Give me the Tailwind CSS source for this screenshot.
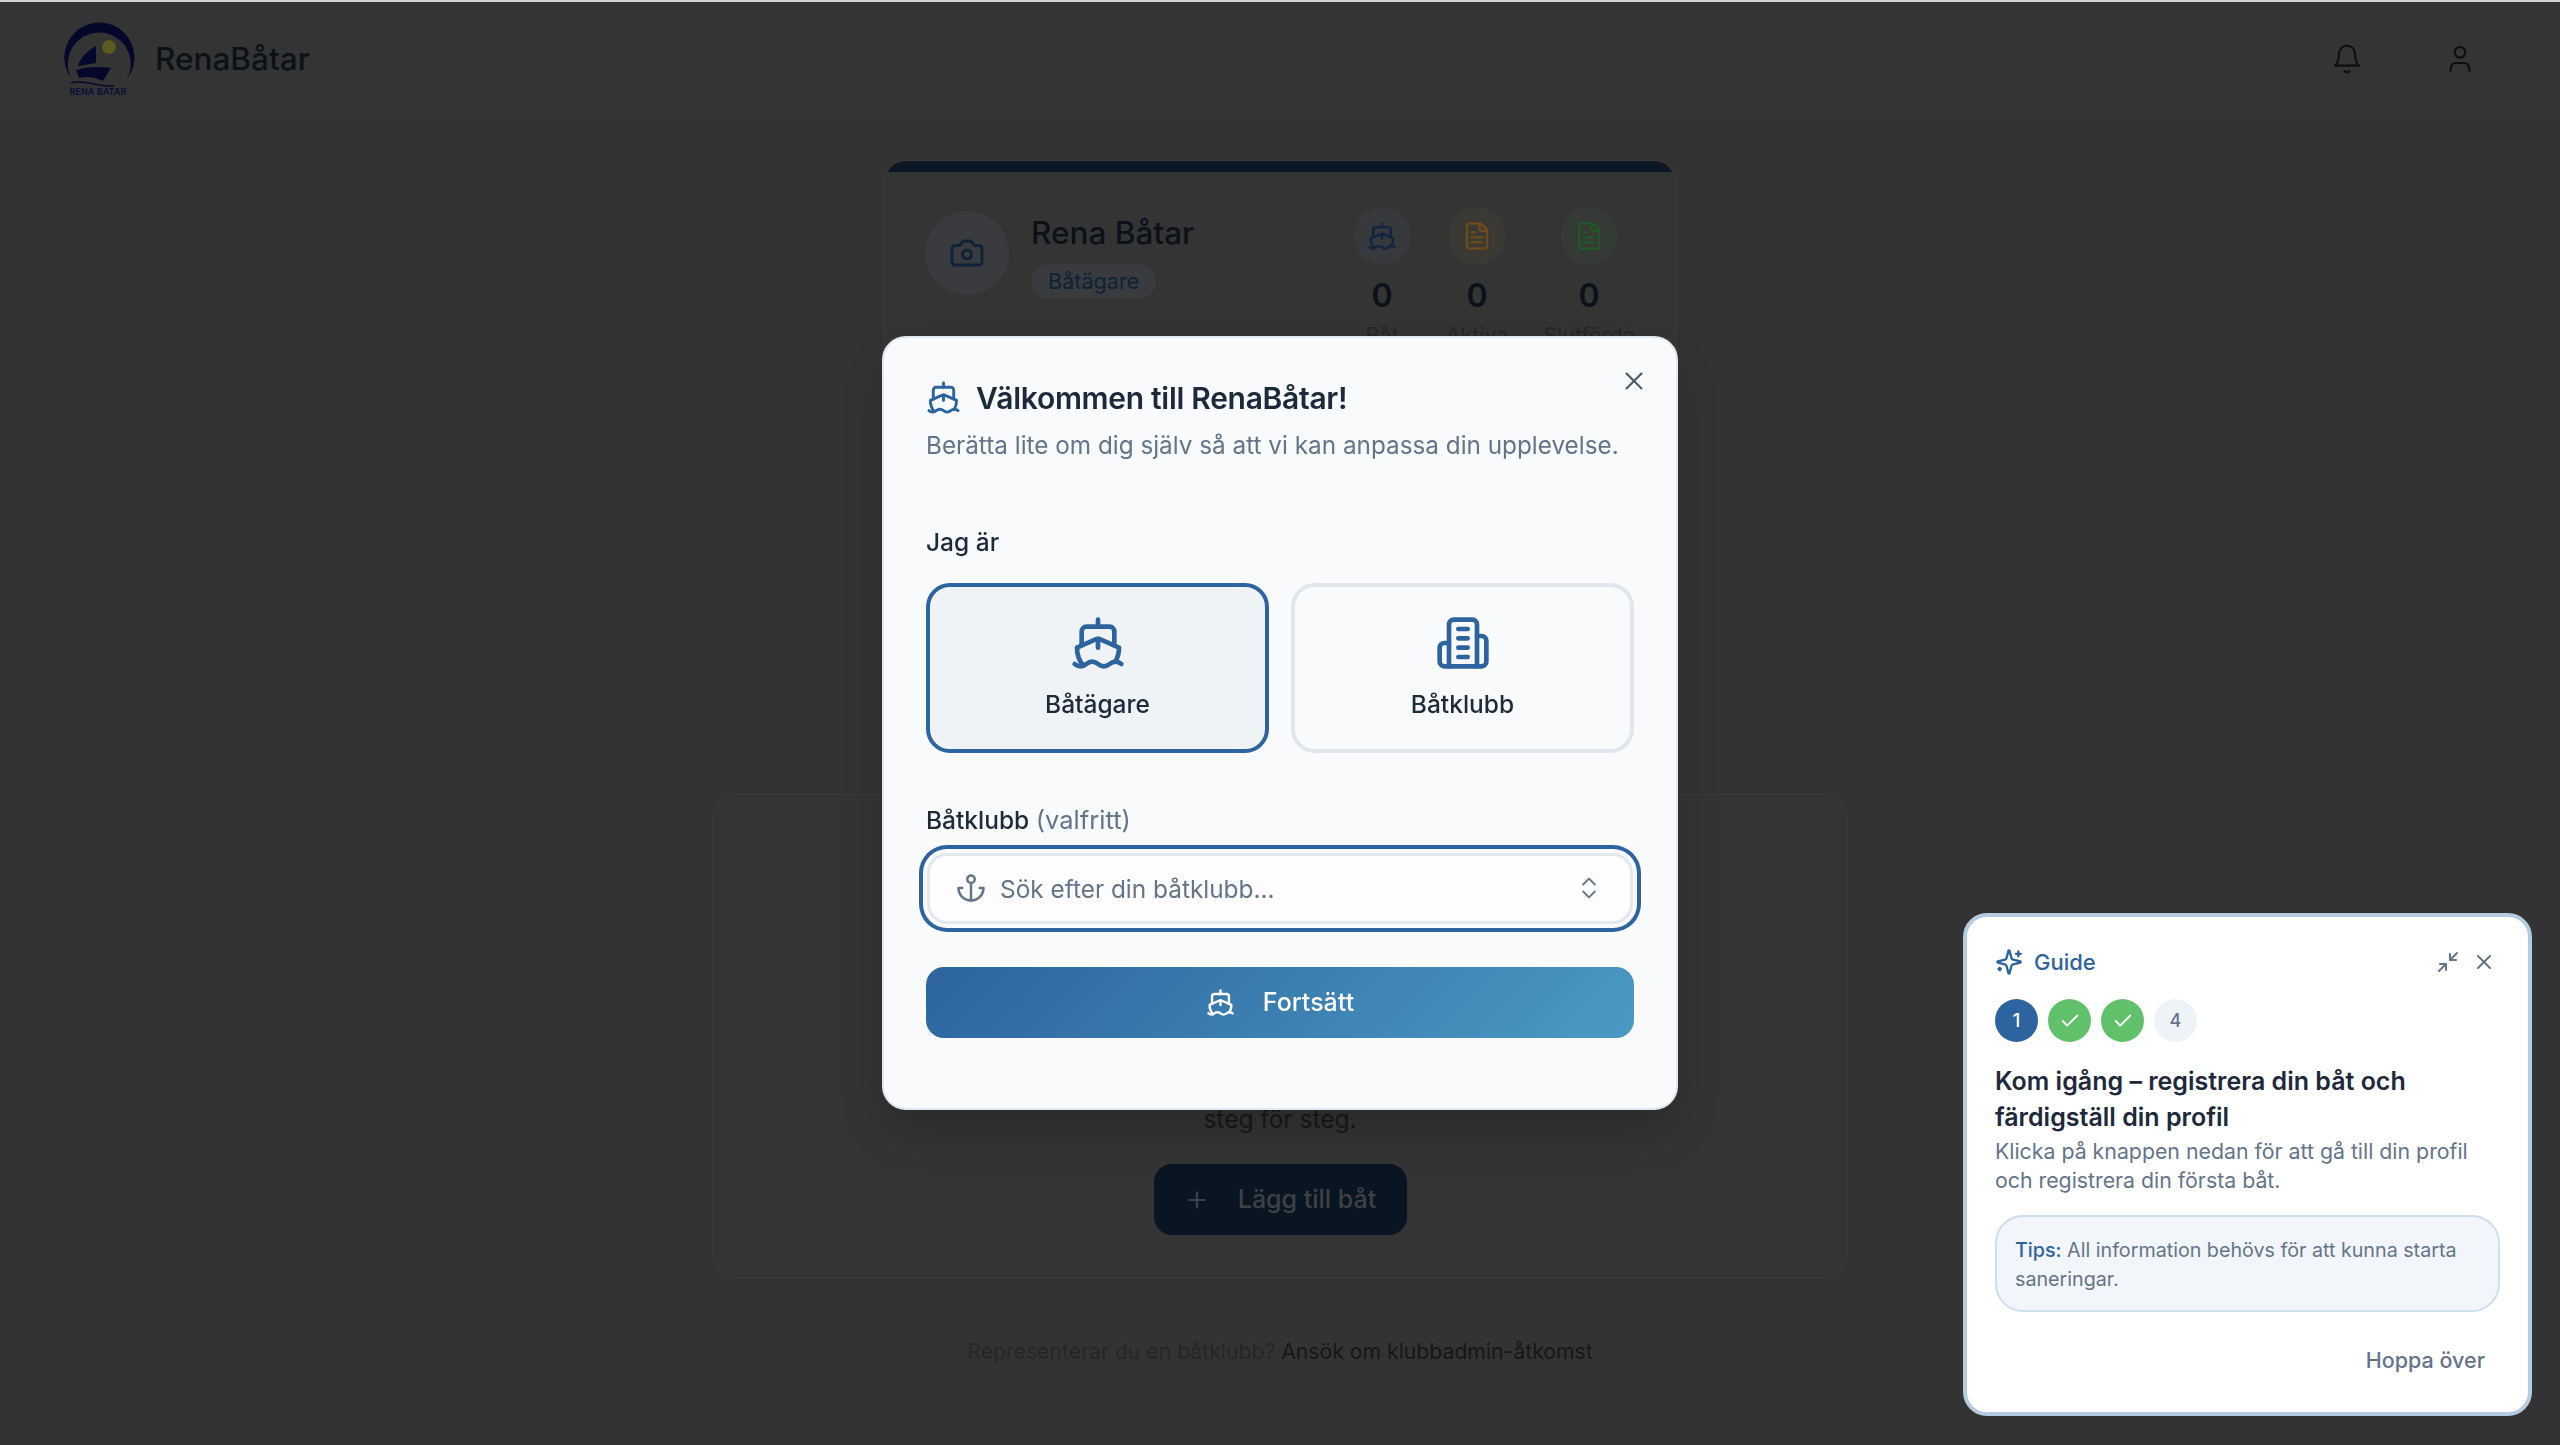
<!doctype html>
<html>
<head>
  <meta charset="UTF-8">
  <meta name="viewport" content="width=device-width, initial-scale=1.0">
  <script src="https://cdn.jsdelivr.net/npm/@tailwindcss/browser@4"></script>
</head>
<body class="bg-[#333333] font-['Inter',sans-serif] overflow-hidden">
  <!-- shared icons -->
  <svg class="hidden">
    <symbol id="i-ship" viewBox="0 0 24 24"><path d="M12 10.189V14"/><path d="M12 2v3"/><path d="M19 13V7a2 2 0 0 0-2-2H7a2 2 0 0 0-2 2v6"/><path d="M19.38 20A11.6 11.6 0 0 0 21 14l-8.188-3.639a2 2 0 0 0-1.624 0L3 14a11.6 11.6 0 0 0 2.81 7.76"/><path d="M2 21c.6.5 1.2 1 2.5 1 2.5 0 2.5-2 5-2 1.3 0 1.9.5 2.5 1s1.2 1 2.5 1c2.5 0 2.5-2 5-2 1.3 0 1.9.5 2.5 1"/></symbol>
    <symbol id="i-file" viewBox="0 0 24 24"><path d="M15 2H6a2 2 0 0 0-2 2v16a2 2 0 0 0 2 2h12a2 2 0 0 0 2-2V7Z"/><path d="M14 2v4a2 2 0 0 0 2 2h4"/><path d="M10 9H8"/><path d="M16 13H8"/><path d="M16 17H8"/></symbol>
    <symbol id="i-x" viewBox="0 0 24 24"><path d="M18 6 6 18"/><path d="m6 6 12 12"/></symbol>
    <symbol id="i-check" viewBox="0 0 24 24"><path d="M20 6 9 17l-5-5"/></symbol>
  </svg>

  <div class="h-[2px] bg-[#d4d4d4]"></div>

  <!-- dimmed page behind the dialog -->
  <header class="h-[114px] flex items-center justify-between pl-[64px] pr-[84px] bg-[#343434]">
    <div class="flex items-center gap-[19px]">
      <svg class="w-[72px] h-[76px] mt-[2px]" viewBox="0 0 72 76">
        <path d="M7 56A35 35 0 1 1 63 57 31.5 31.5 0 1 0 7 56Z" fill="#05072a"/>
        <circle cx="45" cy="25" r="7" fill="#5b5a1f"/>
        <path d="M32 24V41L14 44C16 36 23 29 32 24Z" fill="#05072a"/>
        <path d="M12 48C22 45 35 44 47 46L39 59C31 55 22 54 15 56Z" fill="#05072a"/>
        <path d="M7 61C20 57 34 65 50 64" fill="none" stroke="#05072a" stroke-width="1.4"/>
        <text x="34" y="72.5" text-anchor="middle" font-size="9" font-weight="700" font-family="Inter" fill="#0b1035">RENA BÅTAR</text>
      </svg>
      <span class="text-[31.5px] leading-none font-medium text-[#0b1118]">RenaBåtar</span>
    </div>
    <div class="flex items-center gap-[81px] text-[#0c0f12]">
      <svg class="w-[32px] h-[32px] fill-none stroke-current stroke-[1.6]" stroke-linecap="round" stroke-linejoin="round" viewBox="0 0 24 24"><path d="M6 8a6 6 0 0 1 12 0c0 7 3 9 3 9H3s3-2 3-9"/><path d="M10.3 21a1.94 1.94 0 0 0 3.4 0"/></svg>
      <svg class="w-[32px] h-[32px] fill-none stroke-current stroke-[1.6]" stroke-linecap="round" stroke-linejoin="round" viewBox="0 0 24 24"><path d="M19 21v-2a4 4 0 0 0-4-4H9a4 4 0 0 0-4 4v2"/><circle cx="12" cy="7" r="4"/></svg>
    </div>
  </header>

  <main class="flex flex-col items-center pt-[44px]">
    <section class="w-[792px] h-[240px] rounded-t-[22px] border border-[#3b3b3b] bg-[#343434] overflow-hidden">
      <div class="h-[11px] bg-[#0b1724]"></div>
      <div class="flex pl-[40px] pr-[41px] pt-[35px] justify-between">
        <div class="flex gap-[22px]">
          <div class="w-[84px] h-[84px] mt-[4px] rounded-full bg-[#393b3f] flex items-center justify-center text-[#0f2238]">
            <svg class="w-[36px] h-[36px] fill-none stroke-current stroke-2" stroke-linecap="round" stroke-linejoin="round" viewBox="0 0 24 24"><path d="M14.5 4h-5L7 7H4a2 2 0 0 0-2 2v9a2 2 0 0 0 2 2h16a2 2 0 0 0 2-2V9a2 2 0 0 0-2-2h-3l-2.5-3z"/><circle cx="12" cy="13" r="3"/></svg>
          </div>
          <div class="pt-[4px]">
            <div class="text-[31.5px] leading-[44px] font-medium text-[#0b1118]">Rena Båtar</div>
            <span class="inline-block mt-[9px] px-[17px] h-[35px] leading-[35px] rounded-full bg-[#393b3f] text-[21.6px] text-[#0e2136]">Båtägare</span>
          </div>
        </div>
        <div class="flex gap-[38px] text-center">
          <div class="w-[56px] flex flex-col items-center">
            <div class="w-[57px] h-[58px] rounded-full bg-[#38393c] flex items-center justify-center text-[#112540]"><svg class="w-[30px] h-[30px] fill-none stroke-current stroke-2" stroke-linecap="round" stroke-linejoin="round"><use href="#i-ship"/></svg></div>
            <div class="mt-[9px] text-[32px] leading-[44px] font-semibold text-[#0b1118]">0</div>
            <div class="mt-[3px] text-[21.5px] leading-[28px] text-[#23272c]">Båt</div>
          </div>
          <div class="w-[58px] flex flex-col items-center">
            <div class="w-[57px] h-[58px] rounded-full bg-[#3a3933] flex items-center justify-center text-[#6b4a1e]"><svg class="w-[30px] h-[30px] fill-none stroke-current stroke-2" stroke-linecap="round" stroke-linejoin="round"><use href="#i-file"/></svg></div>
            <div class="mt-[9px] text-[32px] leading-[44px] font-semibold text-[#0b1118]">0</div>
            <div class="mt-[3px] text-[21.5px] leading-[28px] text-[#23272c]">Aktiva</div>
          </div>
          <div class="w-[90px] flex flex-col items-center">
            <div class="w-[57px] h-[58px] rounded-full bg-[#363a36] flex items-center justify-center text-[#1f5a26]"><svg class="w-[30px] h-[30px] fill-none stroke-current stroke-[1.8]" stroke-linecap="round" stroke-linejoin="round"><use href="#i-file"/></svg></div>
            <div class="mt-[9px] text-[32px] leading-[44px] font-semibold text-[#0b1118]">0</div>
            <div class="mt-[3px] text-[21.5px] leading-[28px] text-[#23272c] whitespace-nowrap">Slutförda</div>
          </div>
        </div>
      </div>
    </section>

    <section class="w-[1136px] h-[484px] mt-[394px] rounded-[22px] border border-[#3b3b3b] bg-[#343434] flex flex-col items-center justify-end pb-[42px]">
      <p class="text-[24.5px] leading-[36px] text-[#16191d]">steg för steg.</p>
      <button class="mt-[27px] w-[253px] h-[71px] rounded-[18px] bg-[#091522] flex items-center justify-center gap-[28px] text-[25px] font-medium text-[#3e4144]">
        <svg class="w-[26px] h-[26px] fill-none stroke-current stroke-2" stroke-linecap="round" viewBox="0 0 24 24"><path d="M5 12h14"/><path d="M12 5v14"/></svg>
        Lägg till båt
      </button>
    </section>

    <p class="mt-[57px] text-[21.2px] leading-[32px] text-[#23262a]">Representerar du en båtklubb? <span class="text-[#14171a]">Ansök om klubbadmin-åtkomst</span></p>
  </main>

  <!-- dialog -->
  <div class="fixed inset-0 flex items-center justify-center">
    <div class="relative w-[796px] h-[774px] rounded-[24px] bg-[#f8fafc] border-2 border-[#e2e8f0] shadow-2xl px-[42px] pt-[42px]">
      <button class="absolute right-[27px] top-[28px] text-[#475569]">
        <svg class="w-[30px] h-[30px] fill-none stroke-current stroke-[1.6]" stroke-linecap="round" stroke-linejoin="round"><use href="#i-x"/></svg>
      </button>
      <h2 class="flex items-center gap-[15px] text-[30px] leading-[36px] font-semibold tracking-[-0.3px] text-[#1e293b]">
        <svg class="w-[35px] h-[35px] fill-none stroke-[#2d649f] stroke-2" stroke-linecap="round" stroke-linejoin="round"><use href="#i-ship"/></svg>
        Välkommen till RenaBåtar!
      </h2>
      <p class="mt-[11px] text-[24.3px] leading-[36px] text-[#64748b]">Berätta lite om dig själv så att vi kan anpassa din upplevelse.</p>

      <div class="mt-[61px] text-[24.5px] leading-[36px] font-medium text-[#1e293b]">Jag är</div>
      <div class="mt-[23px] grid grid-cols-2 gap-[22px]">
        <button class="h-[170px] rounded-[24px] border-4 border-[#2d649f] bg-[#eff3f6] flex flex-col items-center pt-[28px]">
          <svg class="w-[56px] h-[56px] fill-none stroke-[#2d649f] stroke-2" stroke-linecap="round" stroke-linejoin="round"><use href="#i-ship"/></svg>
          <span class="mt-[15px] text-[24.5px] leading-[36px] font-medium text-[#1e293b]">Båtägare</span>
        </button>
        <button class="h-[170px] rounded-[24px] border-4 border-[#e0e6eb] flex flex-col items-center pt-[28px]">
          <svg class="w-[56px] h-[56px] fill-none stroke-[#2d649f] stroke-2" stroke-linecap="round" stroke-linejoin="round" viewBox="0 0 24 24"><path d="M6 22V4a2 2 0 0 1 2-2h8a2 2 0 0 1 2 2v18Z"/><path d="M6 12H4a2 2 0 0 0-2 2v6a2 2 0 0 0 2 2h2"/><path d="M18 9h2a2 2 0 0 1 2 2v9a2 2 0 0 1-2 2h-2"/><path d="M10 6h4"/><path d="M10 10h4"/><path d="M10 14h4"/><path d="M10 18h4"/></svg>
          <span class="mt-[15px] text-[24.5px] leading-[36px] font-medium text-[#1e293b]">Båtklubb</span>
        </button>
      </div>

      <div class="mt-[49px] text-[24.5px] leading-[36px] font-medium text-[#1e293b]">Båtklubb <span class="text-[25.5px] font-normal text-[#64748b]">(valfritt)</span></div>
      <div class="mt-[15px] mx-[1px] h-[71px] rounded-[20px] border-[3px] border-[#e2e8ee] bg-[#fdfdfe] ring-[4px] ring-[#2d649f] ring-offset-[4px] ring-offset-[#f8fafc] flex items-center pl-[26px] pr-[27px] text-[#64748b]">
        <svg class="w-[30px] h-[30px] fill-none stroke-current stroke-2" stroke-linecap="round" stroke-linejoin="round" viewBox="0 0 24 24"><path d="M12 22V8"/><path d="M5 12H2a10 10 0 0 0 20 0h-3"/><circle cx="12" cy="5" r="3"/></svg>
        <span class="ml-[14px] flex-1 text-[24.4px] leading-[30px] pt-[1px]">Sök efter din båtklubb...</span>
        <svg class="w-[28px] h-[28px] fill-none stroke-current stroke-[1.6]" stroke-linecap="round" stroke-linejoin="round" viewBox="0 0 24 24"><path d="m7 15 5 5 5-5"/><path d="m7 9 5-5 5 5"/></svg>
      </div>

      <button class="mt-[43px] w-full h-[71px] pt-[1px] rounded-[18px] bg-linear-[135deg] from-[#2d649f] to-[#4a9ac4] flex items-center justify-center gap-[28px] text-[25px] font-medium text-white">
        <svg class="w-[29px] h-[29px] fill-none stroke-current stroke-2" stroke-linecap="round" stroke-linejoin="round"><use href="#i-ship"/></svg>
        Fortsätt
      </button>
    </div>
  </div>

  <!-- guide panel -->
  <aside class="fixed right-[28px] bottom-[29px] w-[569px] h-[503px] rounded-[24px] border-4 border-[#b4cbe2] bg-white px-[28px] pt-[27px]">
    <div class="flex items-center h-[36px]">
      <svg class="w-[28px] h-[28px] fill-none stroke-[#2d649f] stroke-2" stroke-linecap="round" stroke-linejoin="round" viewBox="0 0 24 24"><path d="M9.937 15.5A2 2 0 0 0 8.5 14.063l-6.135-1.582a.5.5 0 0 1 0-.962L8.5 9.936A2 2 0 0 0 9.937 8.5l1.582-6.135a.5.5 0 0 1 .963 0L14.063 8.5A2 2 0 0 0 15.5 9.937l6.135 1.581a.5.5 0 0 1 0 .964L15.5 14.063a2 2 0 0 0-1.437 1.437l-1.582 6.135a.5.5 0 0 1-.963 0z"/><path d="M20 3v4"/><path d="M22 5h-4"/><path d="M4 17v2"/><path d="M5 18H3"/></svg>
      <span class="ml-[11px] text-[22px] font-medium text-[#2d649f]">Guide</span>
      <svg class="ml-auto w-[24px] h-[24px] fill-none stroke-[#64748b] stroke-2" stroke-linecap="round" stroke-linejoin="round" viewBox="0 0 24 24"><path d="M4 14h6v6"/><path d="M20 10h-6V4"/><path d="M14 10l7-7"/><path d="M3 21l7-7"/></svg>
      <svg class="ml-[12px] mr-[4px] w-[24px] h-[24px] fill-none stroke-[#64748b] stroke-2" stroke-linecap="round" stroke-linejoin="round"><use href="#i-x"/></svg>
    </div>
    <div class="mt-[19px] flex gap-[10px] text-[18px] font-medium">
      <div class="w-[43px] h-[43px] rounded-full bg-[#2d649f] text-white flex items-center justify-center">1</div>
      <div class="w-[43px] h-[43px] rounded-full bg-[#61c16b] text-white flex items-center justify-center"><svg class="w-[22px] h-[22px] fill-none stroke-current stroke-2" stroke-linecap="round" stroke-linejoin="round"><use href="#i-check"/></svg></div>
      <div class="w-[43px] h-[43px] rounded-full bg-[#61c16b] text-white flex items-center justify-center"><svg class="w-[22px] h-[22px] fill-none stroke-current stroke-2" stroke-linecap="round" stroke-linejoin="round"><use href="#i-check"/></svg></div>
      <div class="w-[43px] h-[43px] rounded-full bg-[#eff2f6] text-[#64748b] flex items-center justify-center">4</div>
    </div>
    <h3 class="mt-[21px] text-[25px] leading-[36px] font-semibold text-[#1e293b]">Kom igång – registrera din båt och färdigställ din profil</h3>
    <p class="mt-[2px] text-[21.3px] leading-[29px] text-[#64748b]">Klicka på knappen nedan för att gå till din profil och registrera din första båt.</p>
    <div class="mt-[20px] h-[97px] rounded-[28px] border-2 border-[#cfdeee] bg-[#f2f5f9] px-[18px] pt-[19px] text-[19.7px] leading-[29px] text-[#64748b]"><span class="font-medium text-[#2d649f]">Tips:</span> All information behövs för att kunna starta saneringar.</div>
    <div class="mt-[30px] text-right pr-[15px] text-[21.5px] leading-[36px] font-medium text-[#64748b]">Hoppa över</div>
  </aside>
</body>
</html>
